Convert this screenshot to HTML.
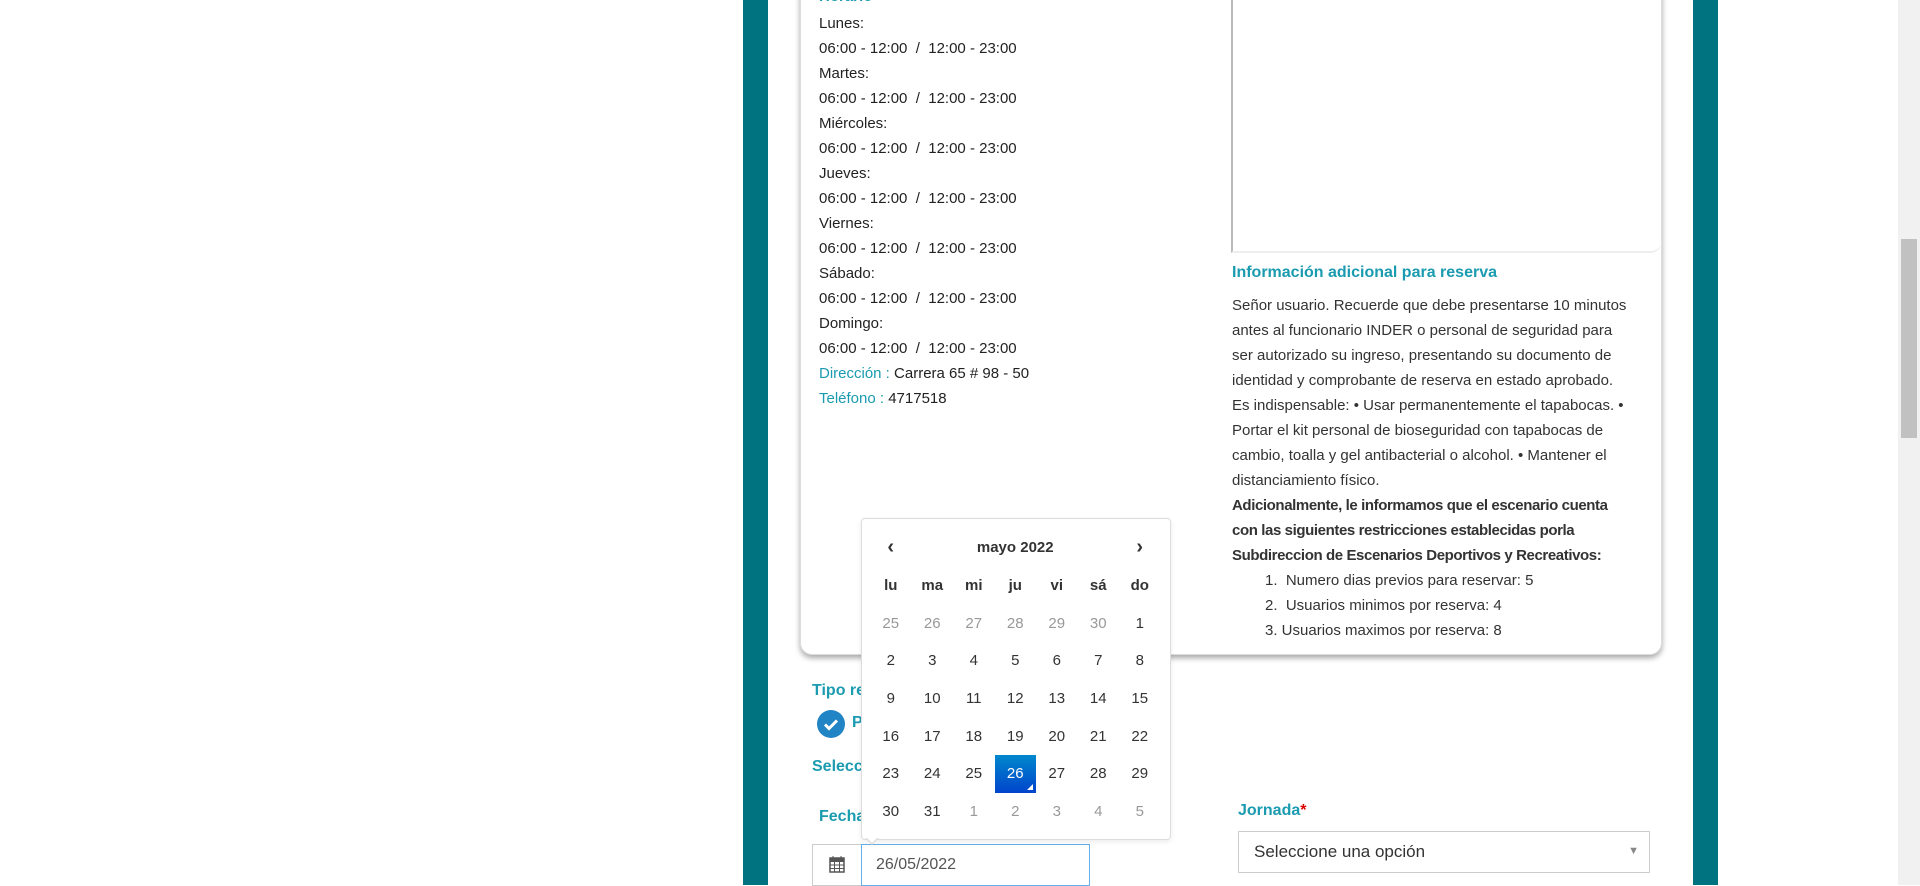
<!DOCTYPE html>
<html><head><meta charset="utf-8"><style>
*{margin:0;padding:0;box-sizing:border-box}
body{width:1920px;height:885px;overflow:hidden;background:#fff;font-family:"Liberation Sans",sans-serif;color:#333;position:relative;font-size:15px}
.a{position:absolute;white-space:nowrap}
.teal{color:#1a9bb0}
.tb{color:#1a9bb0;font-weight:bold}
.cal td{width:41.5px;height:37.7px;text-align:center;font-size:15px}
.cal .g{color:#999}
</style></head><body>
<div class="a" style="left:743px;top:0;width:25px;height:885px;background:#007380"></div>
<div class="a" style="left:1693px;top:0;width:25px;height:885px;background:#007380"></div>
<div class="a" style="left:1898px;top:0;width:22px;height:885px;background:#f1f1f1"></div>
<div class="a" style="left:1901px;top:239px;width:16px;height:199px;background:#c1c1c1"></div>

<div class="a" style="left:800px;top:-20px;width:862px;height:675px;background:#fff;border-radius:0 0 12px 12px;box-shadow:0 3px 6px rgba(0,0,0,.35);border:1px solid #ddd"></div>
<div class="a tb" style="left:819px;top:-12px;font-size:15px">Horario</div>
<div class="a" style="left:819px;top:11px;line-height:25px;font-size:15px;color:#222">
Lunes:<br>06:00 - 12:00 &nbsp;/&nbsp; 12:00 - 23:00<br>Martes:<br>06:00 - 12:00 &nbsp;/&nbsp; 12:00 - 23:00<br>Miércoles:<br>06:00 - 12:00 &nbsp;/&nbsp; 12:00 - 23:00<br>Jueves:<br>06:00 - 12:00 &nbsp;/&nbsp; 12:00 - 23:00<br>Viernes:<br>06:00 - 12:00 &nbsp;/&nbsp; 12:00 - 23:00<br>Sábado:<br>06:00 - 12:00 &nbsp;/&nbsp; 12:00 - 23:00<br>Domingo:<br>06:00 - 12:00 &nbsp;/&nbsp; 12:00 - 23:00<br><span class="teal">Dirección :</span> Carrera 65 # 98 - 50<br><span class="teal">Teléfono :</span> 4717518</div>

<div class="a" style="left:1231px;top:-10px;width:431px;height:263px;border-left:2px solid #bbb;border-bottom:2px solid #eee;border-radius:0 0 12px 0"></div>
<div class="a tb" style="left:1232px;top:264px;font-size:16px">Información adicional para reserva</div>
<div class="a" style="left:1232px;top:293px;line-height:25px;font-size:15px">Señor usuario. Recuerde que debe presentarse 10 minutos<br>antes al funcionario INDER o personal de seguridad para<br>ser autorizado su ingreso, presentando su documento de<br>identidad y comprobante de reserva en estado aprobado.<br>Es indispensable: • Usar permanentemente el tapabocas. •<br>Portar el kit personal de bioseguridad con tapabocas de<br>cambio, toalla y gel antibacterial o alcohol. • Mantener el<br>distanciamiento físico.<br><b style="letter-spacing:-.4px">Adicionalmente, le informamos que el escenario cuenta<br>con las siguientes restricciones establecidas porla<br>Subdireccion de Escenarios Deportivos y Recreativos:</b>
<div style="padding-left:33px">1.&nbsp; Numero dias previos para reservar: 5<br>2.&nbsp; Usuarios minimos por reserva: 4<br>3. Usuarios maximos por reserva: 8</div></div>

<div class="a tb" style="left:812px;top:682px;font-size:16px">Tipo reserva</div>
<div class="a" style="left:817px;top:710px;width:28px;height:28px;border-radius:50%;background:#2185c5"><svg width="28" height="28"><path d="M8 14.5l4 4 8-8" stroke="#fff" stroke-width="3" fill="none"/></svg></div>
<div class="a tb" style="left:852px;top:714px;font-size:16px">P</div>
<div class="a tb" style="left:812px;top:758px;font-size:16px">Seleccione</div>
<div class="a tb" style="left:819px;top:808px;font-size:16px">Fecha</div>
<div class="a tb" style="left:1238px;top:802px;font-size:16px">Jornada<span style="color:#d00">*</span></div>

<div class="a" style="left:812px;top:844px;width:50px;height:42px;border:1px solid #ccc;background:#fff"></div>
<svg class="a" style="left:829px;top:855px" width="16" height="18"><rect x="1" y="3" width="14" height="14" fill="none" stroke="#555" stroke-width="1.5"/><rect x="1" y="3" width="14" height="4" fill="#555"/><path d="M4 1v4M12 1v4M1 10h14M1 13.5h14M5.5 7v10M10.5 7v10" stroke="#555"/></svg>
<div class="a" style="left:861px;top:844px;width:229px;height:42px;border:1px solid #66afe9;background:#fff;padding:11px 14px;font-size:16px;color:#555">26/05/2022</div>

<div class="a" style="left:1238px;top:831px;width:412px;height:42px;border:1px solid #ccc;background:#fff;padding:10px 15px;font-size:17px;color:#333">Seleccione una opción<span style="position:absolute;right:10px;top:13px;font-size:11px;color:#888">▼</span></div>

<div class="a" style="left:861px;top:518px;width:310px;height:322px;background:#fff;border:1px solid #ddd;border-radius:4px;box-shadow:0 2px 6px rgba(0,0,0,.08)"></div>
<div class="a" style="left:865px;top:838px;width:0;height:0;border-left:7px solid transparent;border-right:7px solid transparent;border-top:7px solid #ddd"></div>
<div class="a" style="left:866px;top:837px;width:0;height:0;border-left:6px solid transparent;border-right:6px solid transparent;border-top:6px solid #fff"></div>
<table class="a cal" style="left:870px;top:529px;border-collapse:collapse">
<tr style="font-weight:bold"><td style="font-size:20px">‹</td><td colspan="5">mayo 2022</td><td style="font-size:20px">›</td></tr>
<tr style="font-weight:bold"><td>lu</td><td>ma</td><td>mi</td><td>ju</td><td>vi</td><td>sá</td><td>do</td></tr>
<tr><td class="g">25</td><td class="g">26</td><td class="g">27</td><td class="g">28</td><td class="g">29</td><td class="g">30</td><td>1</td></tr>
<tr><td>2</td><td>3</td><td>4</td><td>5</td><td>6</td><td>7</td><td>8</td></tr>
<tr><td>9</td><td>10</td><td>11</td><td>12</td><td>13</td><td>14</td><td>15</td></tr>
<tr><td>16</td><td>17</td><td>18</td><td>19</td><td>20</td><td>21</td><td>22</td></tr>
<tr><td>23</td><td>24</td><td>25</td><td style="background:linear-gradient(#0088cc,#0044cc);color:#fff;position:relative">26<span style="position:absolute;right:3px;bottom:3px;width:0;height:0;border-left:6px solid transparent;border-bottom:6px solid #fff"></span></td><td>27</td><td>28</td><td>29</td></tr>
<tr><td>30</td><td>31</td><td class="g">1</td><td class="g">2</td><td class="g">3</td><td class="g">4</td><td class="g">5</td></tr>
</table>
</body></html>
